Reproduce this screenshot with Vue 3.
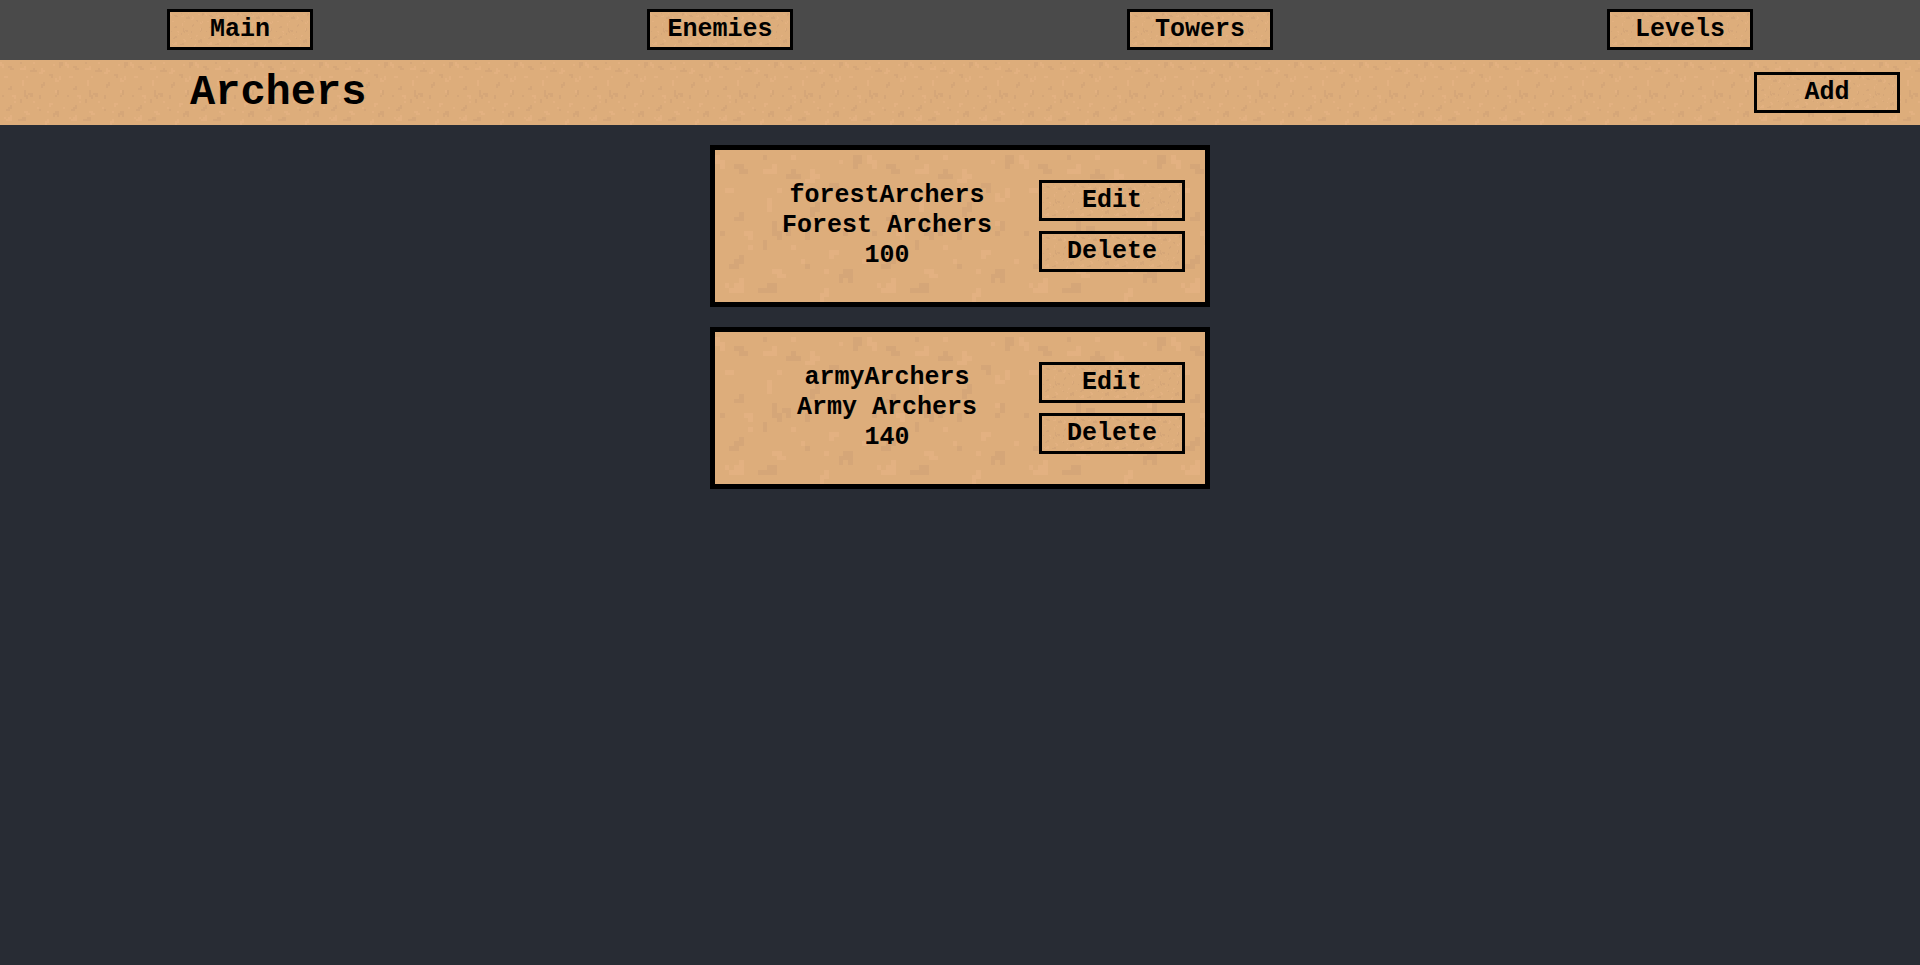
<script setup>
import { ref } from 'vue'

const sections = ['Main', 'Enemies', 'Towers', 'Levels']

const towers = ref([
  { id: 'forestArchers', name: 'Forest Archers', price: 100 },
  { id: 'armyArchers', name: 'Army Archers', price: 140 },
])
</script>

<template>
  <div class="page">
    <nav class="nav">
      <div v-for="section in sections" :key="section" class="nav-cell">
        <button type="button" class="btn sand">{{ section }}</button>
      </div>
    </nav>

    <header class="title-bar sand">
      <h1 class="title">Archers</h1>
      <button type="button" class="btn sand">Add</button>
    </header>

    <main class="list">
      <article v-for="tower in towers" :key="tower.id" class="card sand">
        <div class="info">
          <p>{{ tower.id }}</p>
          <p>{{ tower.name }}</p>
          <p>{{ tower.price }}</p>
        </div>
        <div class="actions">
          <button type="button" class="btn sand">Edit</button>
          <button type="button" class="btn sand">Delete</button>
        </div>
      </article>
    </main>
  </div>
</template>

<style>
body {
  margin: 0;
  background: #282c34;
}
</style>

<style scoped>
.page {
  min-height: 100vh;
  background: #282c34;
  color: #000;
  font-family: "Liberation Mono", "DejaVu Sans Mono", monospace;
  font-size: 25px;
  font-weight: 700;
  line-height: 30px;
}

/* 32x32 pixel-art sand tile, scaled to the height of its box */
.sand {
  background-color: #ddad7b;
  background-image: url("data:image/svg+xml,%3Csvg xmlns='http://www.w3.org/2000/svg' width='32' height='32' viewBox='0 0 32 32' shape-rendering='crispEdges'%3E%3Cpath fill='%23d5a678' d='M10 1h1v1h-1zM29 1h2v2h-1v1h-1zM4 3h2v1h1v1h-2v-1h-1zM16 4h1v1h1v1h-3v-1h1zM24 7h2v2h-1v-1h-1zM21 11h1v2h-1v1h-1v-2h1zM5 13h1v2h-2v-1h1zM12 15h1v2h1v2h-1v-1h-1zM14 16h2v2h-1v-1h-1zM28 15h1v2h-1v1h-1v-1h1zM1 17h1v1h-1zM19 17h1v2h-1zM10 19h1v2h-1zM5 22h1v2h-1v1h-2v-1h1v-1h1zM19 24h1v1h-1zM27 25h2v3h-1v-1h-1v1h-1v-2h1zM11 28h2v2h-4v-1h2z'/%3E%3Cpath fill='%23e3b181' d='M0 1h1v1h1v2h-1v-1h-1zM16 1h1v1h-1zM26 2h1v1h-1zM12 3h1v2h-3v-1h2zM20 4h1v1h1v1h-1v1h-2v-1h1zM2 8h2v1h-2zM13 8h1v1h-1zM29 8h1v2h-1v1h-2v-2h1v1h1zM11 10h1v3h-1zM27 15h1v1h-1zM6 17h2v2h-1v-1h-1zM7 20h1v1h-1zM16 20h1v1h-1zM24 21h2v1h-1v1h-1zM18 23h1v1h-1zM31 23h1v1h-1zM23 25h1v1h-1zM12 25h2v1h1v1h-2v-1h-1zM5 27h1v3h-3v-1h-1v-1h1v1h1v-1h1zM23 29h1v2h-1v1h-1v-2h1z'/%3E%3C/svg%3E");
  background-size: contain;
  background-repeat: repeat;
  image-rendering: pixelated;
}

.btn {
  box-sizing: border-box;
  width: 146px;
  height: 41px;
  padding: 0;
  border: 3px solid #000;
  border-radius: 0;
  color: inherit;
  font: inherit;
  text-align: center;
  white-space: nowrap;
  cursor: pointer;
}

.nav {
  display: grid;
  grid-template-columns: repeat(4, 1fr);
  padding: 9px 0 10px;
  background: #4a4a4a;
}

.nav-cell {
  display: flex;
  justify-content: center;
}

.title-bar {
  display: flex;
  align-items: center;
  justify-content: space-between;
  height: 65px;
  padding: 0 20px 0 190px;
}

.title {
  margin: 0;
  font-size: 42px;
  font-weight: 700;
  line-height: 48px;
}

.list {
  display: flex;
  flex-direction: column;
  align-items: center;
  gap: 20px;
  padding: 20px;
}

.card {
  box-sizing: border-box;
  display: flex;
  align-items: center;
  width: 100%;
  max-width: 500px;
  min-height: 162px;
  padding: 20px;
  border: 5px solid #000;
}

.info {
  flex: 1;
  text-align: center;
}

.info p {
  margin: 0;
}

.actions {
  display: flex;
  flex-direction: column;
  gap: 10px;
}
</style>
